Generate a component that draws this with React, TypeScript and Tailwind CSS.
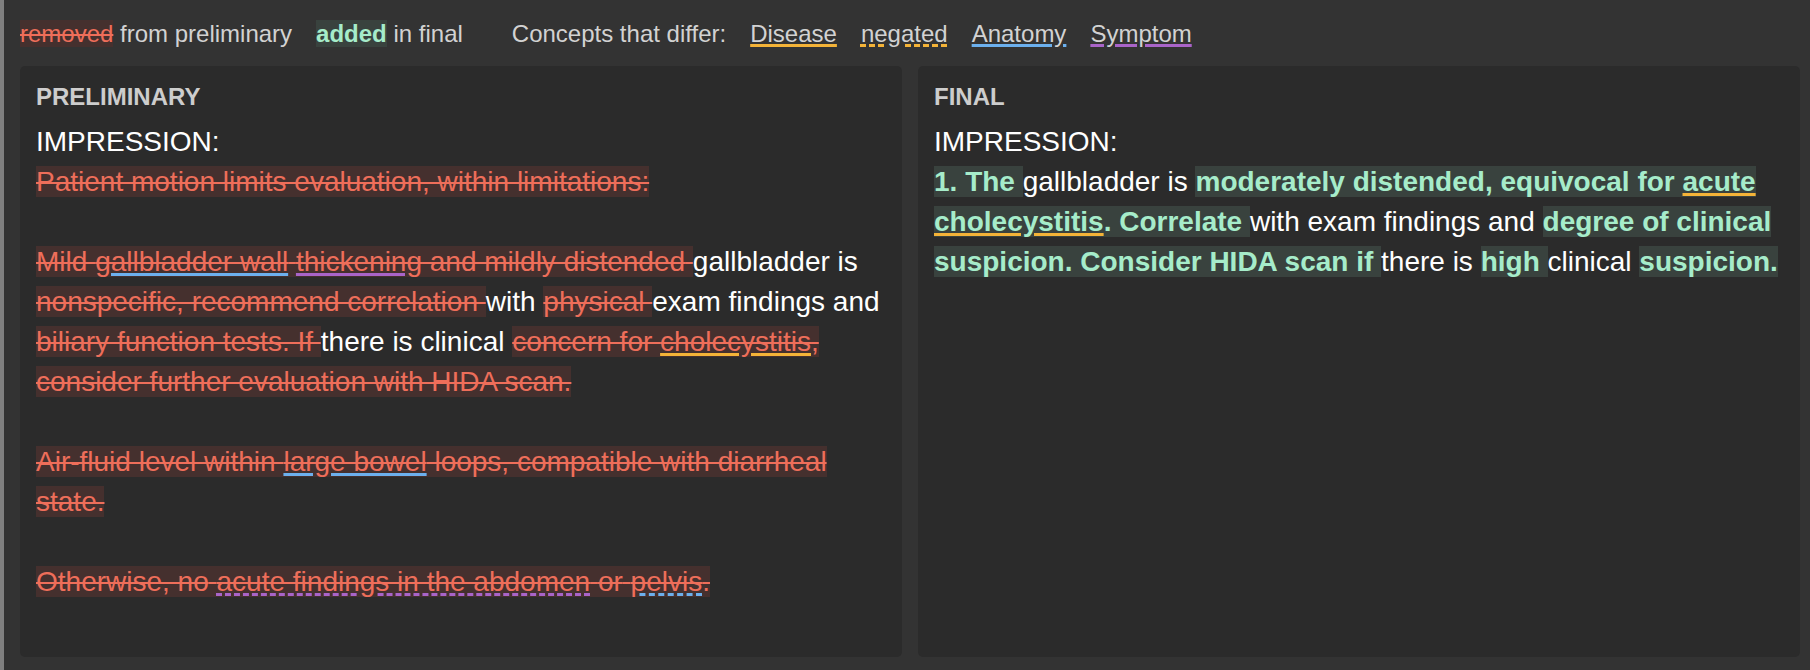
import React from 'react';

type Kind = 'disease' | 'anatomy' | 'symptom';

// underline classes per concept, written out in full so tailwind picks them up
const conceptClass: Record<Kind, string> = {
  disease: 'underline decoration-[#f4b338] decoration-[3px]',
  anatomy: 'underline decoration-[#6cb0ee] decoration-[3px]',
  symptom: 'underline decoration-[#a964c9] decoration-[3px]',
};

const Concept = ({ kind, negated, children }: { kind: Kind; negated?: boolean; children: React.ReactNode }) => (
  <span className={`${conceptClass[kind]} ${negated ? 'decoration-dashed' : 'decoration-solid'}`}>{children}</span>
);

const Del = ({ children }: { children: React.ReactNode }) => (
  <span className="bg-[#45302e] text-[#ee6e5a] line-through decoration-[#ee6e5a] decoration-2">{children}</span>
);

const Add = ({ children }: { children: React.ReactNode }) => (
  <span className="bg-[#39423e] font-bold text-[#a6ecca]">{children}</span>
);

const Panel = ({ title, children }: { title: string; children: React.ReactNode }) => (
  <div className="flex-1 bg-[#2b2b2b] rounded-[5px] px-4 pt-[17px]">
    <div className="text-[24px] leading-[28px] font-bold text-[#cdcdcd] mb-[11px]">{title}</div>
    <div className="text-[28px] leading-[40px] text-white">{children}</div>
  </div>
);

export default function App() {
  return (
    <div className="h-[670px] w-[1810px] bg-[#333333] border-l-4 border-[#808080] flex flex-col font-['Liberation_Sans',Arial,sans-serif] overflow-hidden">
      <div className="h-[66px] shrink-0 flex items-center gap-6 pl-4 pt-[2px] text-[24px] text-[#d2d2d2]">
        <span>
          <Del>removed</Del> from preliminary
        </span>
        <span>
          <Add>added</Add> in final
        </span>
        <span className="ml-[25px]">Concepts that differ:</span>
        <Concept kind="disease">Disease</Concept>
        <Concept kind="disease" negated>
          negated
        </Concept>
        <Concept kind="anatomy">Anatomy</Concept>
        <Concept kind="symptom">Symptom</Concept>
      </div>

      <div className="flex-1 flex gap-4 pl-4 pr-[10px] pb-[13px]">
        <Panel title="PRELIMINARY">
          IMPRESSION:
          <br />
          <Del>Patient motion limits evaluation, within limitations:</Del>
          <br />
          <br />
          <Del>
            Mild <Concept kind="anatomy">gallbladder wall</Concept> <Concept kind="symptom">thickening</Concept> and mildly distended{' '}
          </Del>
          gallbladder is <Del>nonspecific, recommend correlation </Del>with <Del>physical </Del>exam findings and{' '}
          <Del>biliary function tests. If </Del>there is clinical{' '}
          <Del>
            concern for <Concept kind="disease">cholecystitis</Concept>, consider further evaluation with HIDA scan.
          </Del>
          <br />
          <br />
          <Del>
            Air-fluid level within <Concept kind="anatomy">large bowel</Concept> loops, compatible with diarrheal state.
          </Del>
          <br />
          <br />
          <Del>
            Otherwise, no{' '}
            <Concept kind="symptom" negated>
              acute findings in the abdomen
            </Concept>{' '}
            or{' '}
            <Concept kind="anatomy" negated>
              pelvis
            </Concept>
            .
          </Del>
        </Panel>

        <Panel title="FINAL">
          IMPRESSION:
          <br />
          <Add>1. The </Add>gallbladder is{' '}
          <Add>
            moderately distended, equivocal for <Concept kind="disease">acute</Concept> <Concept kind="disease">cholecystitis</Concept>. Correlate{' '}
          </Add>
          with exam findings and <Add>degree of clinical suspicion. Consider HIDA scan if </Add>there is <Add>high </Add>clinical{' '}
          <Add>suspicion.</Add>
        </Panel>
      </div>
    </div>
  );
}
